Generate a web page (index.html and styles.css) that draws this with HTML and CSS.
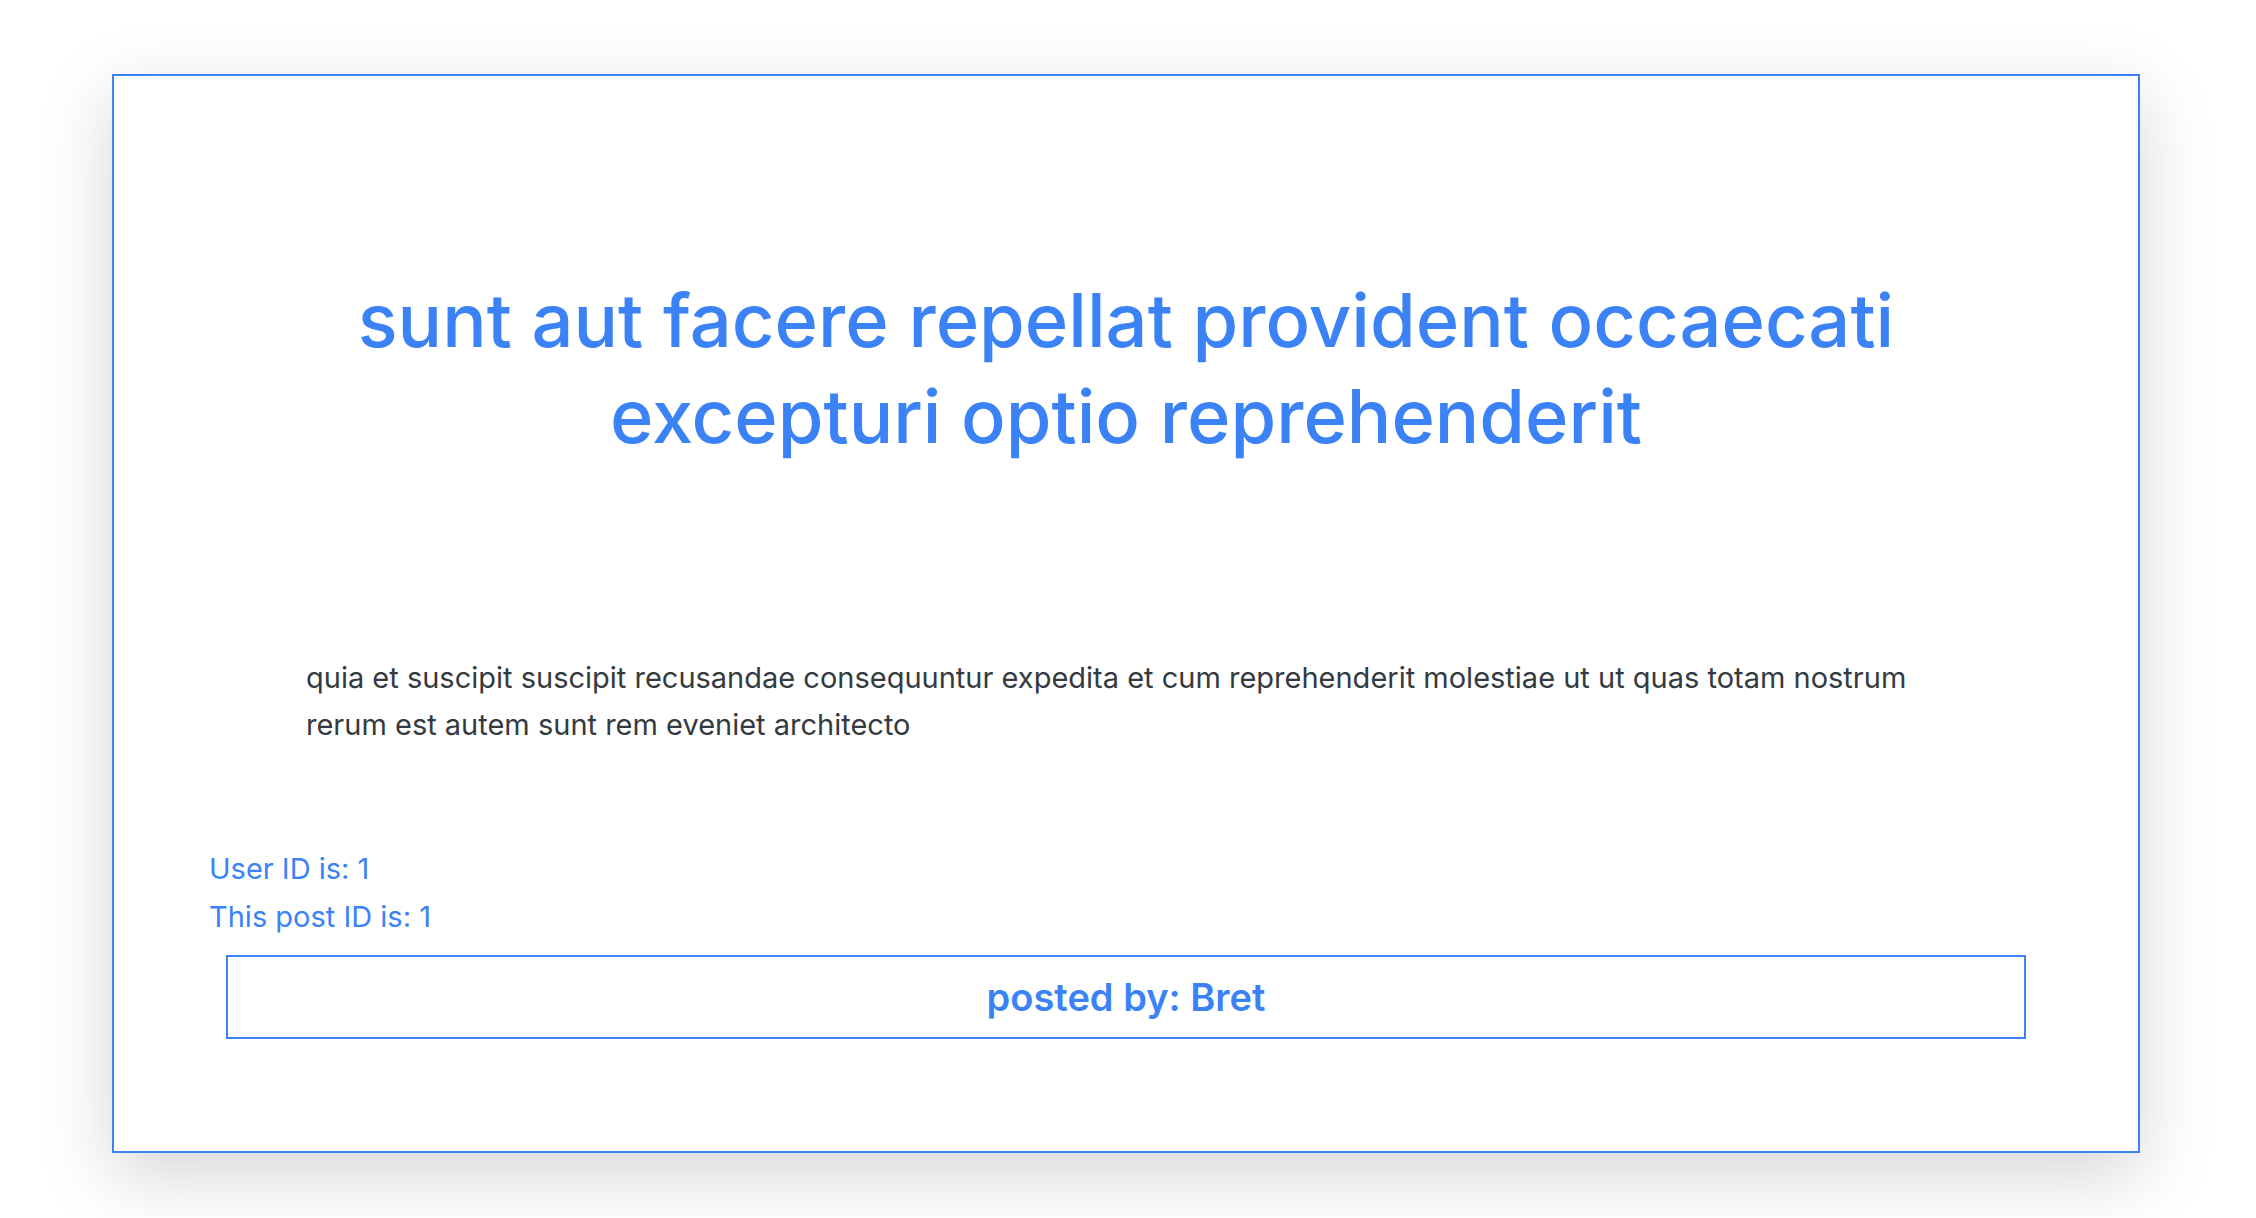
FILE: index.html
```html
<!DOCTYPE html>
<html lang="en">
<head>
  <meta charset="UTF-8">
  <meta name="viewport" content="width=device-width, initial-scale=1.0">
  <title>Post 1</title>
  <link rel="stylesheet" href="styles.css">
</head>
<body>
  <div class="post">
    <h1 class="post-title">sunt aut facere repellat provident occaecati excepturi optio reprehenderit</h1>
    <p class="post-body">quia et suscipit suscipit recusandae consequuntur expedita et cum reprehenderit molestiae ut ut quas totam nostrum rerum est autem sunt rem eveniet architecto</p>
    <div class="post-meta">
      <div>User ID is: 1</div>
      <div>This post ID is: 1</div>
    </div>
    <div class="post-author">posted by: Bret</div>
  </div>
</body>
</html>
```

FILE: styles.css
```css
body {
  font-family: 'Inter', 'Roboto', sans-serif;
  margin: 0;
  background: #ffffff;
  padding: 74px 0 64px;
}
.post {
  margin: 0 116px 0 112px;
  box-sizing: border-box;
  border: 2px solid #3b82f6;
  background: #fff;
  box-shadow: 0 22px 70px rgba(0, 0, 0, 0.17);
  padding: 196px 112px 112px;
}
.post-title {
  color: #3b82f6;
  font-size: 74px;
  font-weight: 500;
  line-height: 96px;
  text-align: center;
  margin: 0;
}
.post-body {
  color: #343a40;
  font-size: 29px;
  line-height: 47px;
  margin: 190px 80px 97px;
}
.post-meta {
  color: #3b82f6;
  font-size: 29px;
  line-height: 48px;
  margin-left: -17px;
}
.post-author {
  border: 2px solid #3b82f6;
  color: #3b82f6;
  font-size: 38px;
  font-weight: 600;
  text-align: center;
  line-height: 80px;
  margin-top: 14px;
}
```
